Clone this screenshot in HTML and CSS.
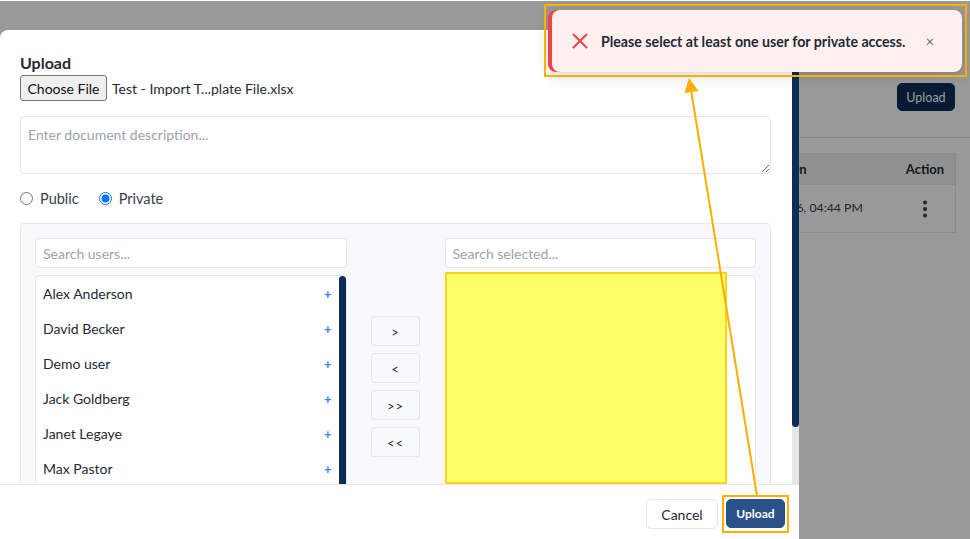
FILE: index.html
```html
<!DOCTYPE html>
<html lang="en">
<head>
<meta charset="utf-8">
<title>Documents</title>
<link rel="stylesheet" href="styles.css">
</head>
<body>
<main class="page">
  <header class="page-header">
    <button class="primary-btn" type="button">Upload</button>
  </header>
  <section class="table">
    <div class="table-row table-head">
      <div class="cell-name"></div>
      <div class="cell-date">Uploaded On</div>
      <div class="cell-action">Action</div>
    </div>
    <div class="table-row table-body">
      <div class="cell-name"></div>
      <div class="cell-date">Jan 16, 2026, 04:44 PM</div>
      <div class="cell-action">
        <svg class="dots" viewBox="0 0 6 18" width="6" height="18"><circle cx="3" cy="2.5" r="2"/><circle cx="3" cy="9" r="2"/><circle cx="3" cy="15.5" r="2"/></svg>
      </div>
    </div>
  </section>
</main>

<div class="backdrop"></div>

<div class="modal">
  <div class="modal-main">
    <div class="modal-content">
      <h2 class="modal-title">Upload</h2>
      <div class="file-row">
        <button class="file-btn" type="button">Choose File</button>
        <span class="file-name">Test - Import T...plate File.xlsx</span>
      </div>
      <textarea class="description" placeholder="Enter document description..."></textarea>
      <div class="access-row">
        <div class="radio"><input id="access-public" type="radio" name="access"><label for="access-public">Public</label></div>
        <div class="radio"><input id="access-private" type="radio" name="access" checked><label for="access-private">Private</label></div>
      </div>
      <div class="picker">
        <input class="search" type="text" placeholder="Search users...">
        <div class="picker-spacer"></div>
        <input class="search" type="text" placeholder="Search selected...">
        <div class="list">
          <ul class="rows">
            <li class="row"><span>Alex Anderson</span><span class="plus">+</span></li>
            <li class="row"><span>David Becker</span><span class="plus">+</span></li>
            <li class="row"><span>Demo user</span><span class="plus">+</span></li>
            <li class="row"><span>Jack Goldberg</span><span class="plus">+</span></li>
            <li class="row"><span>Janet Legaye</span><span class="plus">+</span></li>
            <li class="row"><span>Max Pastor</span><span class="plus">+</span></li>
          </ul>
          <div class="list-thumb"></div>
        </div>
        <div class="moves">
          <button class="move-btn" type="button">&gt;</button>
          <button class="move-btn" type="button">&lt;</button>
          <button class="move-btn" type="button">&gt;&gt;</button>
          <button class="move-btn" type="button">&lt;&lt;</button>
        </div>
        <div class="list"></div>
      </div>
    </div>
    <div class="scroll-track"><div class="scroll-thumb"></div></div>
  </div>
  <footer class="modal-footer">
    <button class="cancel-btn" type="button">Cancel</button>
    <button class="submit-btn" type="button">Upload</button>
  </footer>
</div>

<div class="toast">
  <div class="toast-body">
    <svg class="toast-icon" viewBox="0 0 18 18" width="18" height="18"><path d="M2 2 L16 16 M16 2 L2 16"/></svg>
    <span class="toast-text">Please select at least one user for private access.</span>
    <span class="toast-close">×</span>
  </div>
</div>

<div class="mark-yellow"></div>
<div class="mark-box mark-toast"></div>
<div class="mark-box mark-upload"></div>
<svg class="mark-arrow" viewBox="0 0 970 539" width="970" height="539">
  <line x1="757" y1="496" x2="691" y2="90"/>
  <polygon points="689,78 684.5,93 698.5,91"/>
</svg>
</body>
</html>
```

FILE: styles.css
```css
* { box-sizing: border-box; }
html, body { margin: 0; height: 100%; overflow: hidden; }
body {
  position: relative;
  background: #fff;
  color: #1f2937;
  font-family: Lato, "Liberation Sans", sans-serif;
  font-size: 14px;
}
button, input, textarea { font-family: inherit; }

/* Page behind the dialog */
.page-header {
  height: 138px;
  padding: 83px 15px 0 0;
  display: flex;
  justify-content: flex-end;
  align-items: flex-start;
  border-bottom: 1px solid #e5e7eb;
}
.primary-btn {
  width: 58px;
  height: 28px;
  padding: 0;
  border: 1px solid #0c2d57;
  border-radius: 5px;
  background: #0c2d57;
  color: #fff;
  font-size: 12.5px;
}
.table {
  margin: 15px 14px 0;
  border: 1px solid #e5e7eb;
}
.table-row {
  display: grid;
  grid-template-columns: 1fr 196px 60px;
  align-items: center;
}
.table-head {
  height: 31px;
  background: #f0f0f0;
  border-bottom: 1px solid #e5e7eb;
  font-weight: 700;
  font-size: 13px;
  color: #1f2937;
}
.table-body { height: 47px; font-size: 12.25px; color: #374151; }
.cell-date { padding-left: 35px; }
.table-head .cell-date { padding-left: 31px; }
.table-body .cell-date { margin-top: -2px; }
.cell-action { display: flex; justify-content: center; }
.dots { fill: #374151; display: block; }

.backdrop {
  position: absolute;
  inset: 1px 0 0 0;
  background: rgba(0, 0, 0, 0.4);
}

/* Dialog */
.modal {
  position: absolute;
  left: 0;
  top: 30px;
  width: 799px;
  height: 509px;
  display: flex;
  flex-direction: column;
  background: #fff;
  border-radius: 8px 8px 0 0;
  overflow: hidden;
}
.modal-main { flex: 1; min-height: 0; display: flex; overflow: hidden; }
.modal-content { flex: 1; min-width: 0; padding: 21px 21px 0 20px; }
.modal-title {
  margin: 0;
  font-size: 16px;
  line-height: 24px;
  font-weight: 700;
  color: #1f2937;
}
.file-row { display: flex; align-items: center; height: 26px; gap: 5px; color: #1f2937; }
.file-btn {
  width: 87px;
  height: 26px;
  padding: 0;
  border: 1px solid #767676;
  border-radius: 3px;
  background: #efefef;
  color: #111;
  font-size: 14px;
}
.description {
  display: block;
  width: 100%;
  height: 58px;
  margin-top: 15px;
  padding: 8px 7px;
  border: 1px solid #e5e7eb;
  border-radius: 4px;
  font-size: 14px;
  line-height: 20px;
  outline: none;
}
.description::placeholder, .search::placeholder { color: #9ca3af; opacity: 1; }
.access-row { display: flex; align-items: center; gap: 20px; height: 18px; margin-top: 15px; }
.radio { display: flex; align-items: center; gap: 7px; font-size: 14.5px; color: #374151; }
.radio input { width: 13px; height: 13px; margin: 0; }
.picker {
  display: grid;
  grid-template-columns: 1fr 98px 1fr;
  grid-template-rows: 30px 223px;
  row-gap: 7px;
  margin-top: 16px;
  padding: 14px;
  border: 1px solid #e5e7eb;
  border-radius: 4px;
  background: #f8f9fb;
}
.search {
  width: 100%;
  height: 30px;
  padding: 0 7px;
  border: 1px solid #e5e7eb;
  border-radius: 4px;
  background: #fff;
  font-size: 14px;
  outline: none;
}
.list {
  display: flex;
  height: 223px;
  border: 1px solid #e5e7eb;
  border-radius: 4px;
  background: #fff;
  overflow: hidden;
}
.rows { flex: 1; margin: 0; padding: 0 7px; list-style: none; }
.row {
  display: flex;
  justify-content: space-between;
  align-items: center;
  height: 35px;
  color: #1f2937;
}
.plus { color: #3b82f6; font-size: 13px; font-weight: 700; line-height: 1; padding-top: 1px; }
.list-thumb { flex: none; width: 7px; background: #0c2d57; border-radius: 4px; }
.moves {
  display: flex;
  flex-direction: column;
  align-items: center;
  justify-content: center;
  gap: 7px;
}
.move-btn {
  width: 49px;
  height: 30px;
  padding: 2px 0 0;
  border: 1px solid #e5e7eb;
  border-radius: 3px;
  background: #f8f9fb;
  color: #1f2937;
  font-size: 13px;
  letter-spacing: 1px;
}
.scroll-track { flex: none; width: 7px; background: #e6e6e6; }
.scroll-thumb { height: 397px; background: #0c2d57; border-radius: 0 0 4px 4px; }
.modal-footer {
  flex: none;
  height: 55px;
  display: flex;
  justify-content: flex-end;
  align-items: flex-start;
  gap: 8px;
  padding: 14px 14px 0 0;
  border-top: 1px solid #e5e7eb;
  background: #fff;
}
.cancel-btn {
  width: 72px;
  height: 30px;
  padding: 0;
  border: 1px solid #e5e7eb;
  border-radius: 5px;
  background: #fff;
  color: #1f2937;
  font-size: 14px;
}
.submit-btn {
  width: 59px;
  height: 29px;
  padding: 0;
  border: 1px solid #2a5288;
  border-radius: 5px;
  background: #2a5288;
  color: #fff;
  font-size: 12px;
  font-weight: 700;
}

/* Toast */
.toast {
  position: absolute;
  left: 548px;
  top: 10px;
  width: 414px;
  height: 62px;
  padding-left: 4px;
  background: #ef4444;
  border-radius: 8px;
  box-shadow: 0 4px 14px rgba(0, 0, 0, 0.16);
}
.toast-body {
  display: flex;
  align-items: center;
  height: 100%;
  padding-left: 19px;
  background: #fff0f0;
  border-radius: 8px;
}
.toast-icon { flex: none; fill: none; stroke: #ef4444; stroke-width: 2; }
.toast-text { margin-left: 12px; font-size: 14.2px; font-weight: 700; color: #1f2937; white-space: nowrap; }
.toast-close { margin-left: 20px; font-size: 15px; color: #6b7280; }

/* Screenshot annotations */
.mark-yellow {
  position: absolute;
  left: 445px;
  top: 272px;
  width: 282px;
  height: 212px;
  background: #ffff66;
  border: 2px solid #ffd21f;
}
.mark-box { position: absolute; border: 2px solid #ffae00; }
.mark-toast { left: 544px; top: 4px; width: 423px; height: 73px; }
.mark-upload { left: 722px; top: 495px; width: 67px; height: 38px; }
.mark-arrow { position: absolute; left: 0; top: 0; pointer-events: none; }
.mark-arrow line { stroke: #ffae00; stroke-width: 2; }
.mark-arrow polygon { fill: #ffae00; }
```
